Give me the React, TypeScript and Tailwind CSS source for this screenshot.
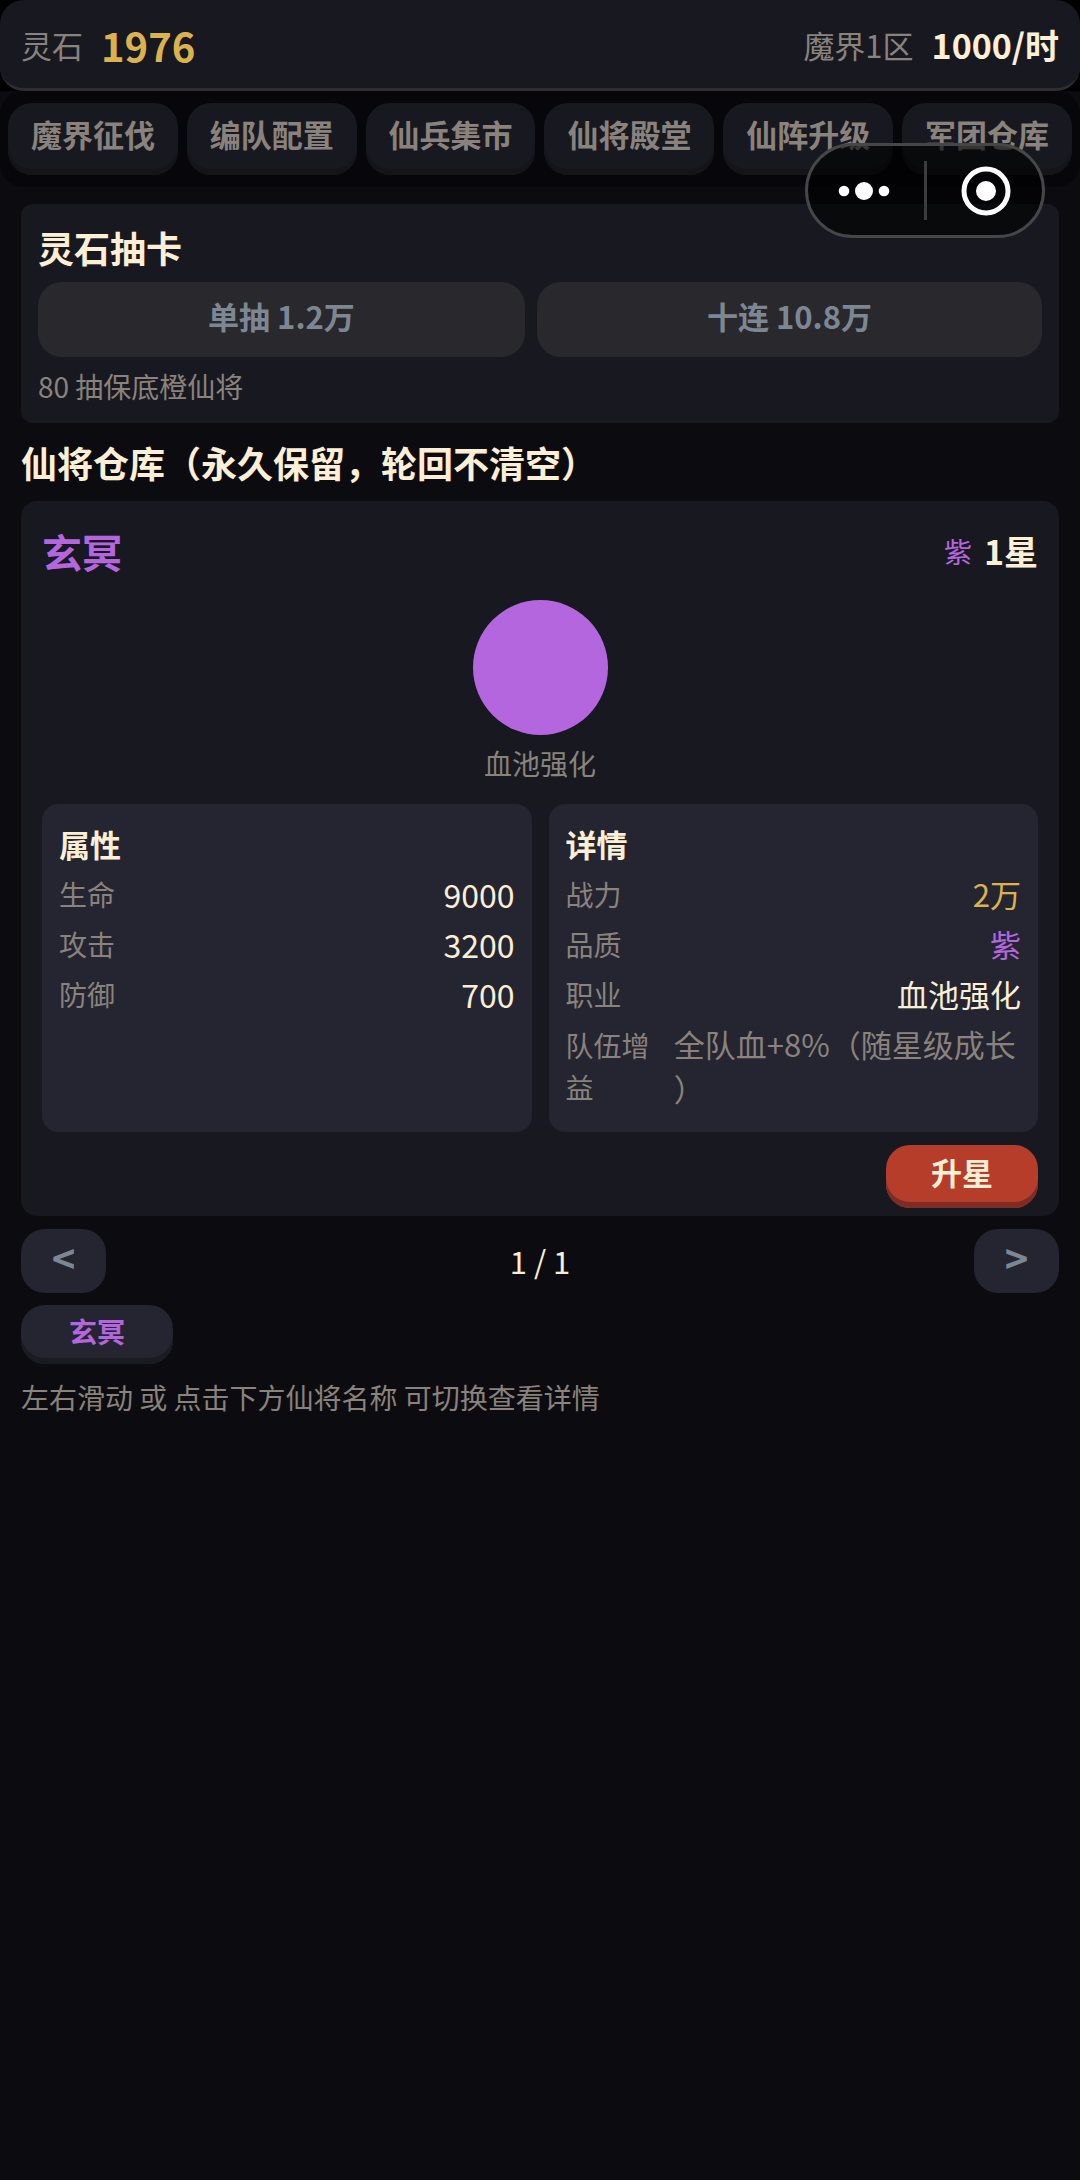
const tabs = ['魔界征伐', '编队配置', '仙兵集市', '仙将殿堂', '仙阵升级', '军团仓库']

const stats = [
    { label: '生命', value: '9000', color: 'text-[#fbeed6]' },
    { label: '攻击', value: '3200', color: 'text-[#fbeed6]' },
    { label: '防御', value: '700', color: 'text-[#fbeed6]' },
]

const details = [
    { label: '战力', value: '2万', color: 'text-[#dcb24e]' },
    { label: '品质', value: '紫', color: 'text-[#b466de]' },
    { label: '职业', value: '血池强化', color: 'text-[#fbeed6]' },
    { label: '队伍增益', value: '全队血+8%（随星级成长）', color: 'text-[#8a827c]' },
]

function Header () {
    return (
        <header className="flex items-center justify-between rounded-3xl border-b-3 border-[#302e31] bg-[#181920] px-[21px] pt-[17px] pb-[15px] leading-[56px]">
            <div className="flex items-center gap-[18px]">
                <span className="text-[31px] text-[#8a827c]">灵石</span>
                <span className="text-[40px] font-bold text-[#dcb24e]">1976</span>
            </div>
            <div className="flex items-center gap-[18px]">
                <span className="text-[31px] text-[#8a827c]">魔界1区</span>
                <span className="text-[34px] font-bold text-[#fdefd5]">1000/时</span>
            </div>
        </header>
    )
}

function Nav () {
    return (
        <nav className="flex gap-[9px] rounded-3xl bg-[#07070b] px-2 py-3">
            {tabs.map((tab) => (
                <button
                    key={tab}
                    type="button"
                    className="h-[72px] flex-1 rounded-3xl bg-[#181920] pb-2.5 text-[31px] font-bold whitespace-nowrap text-[#8a827c] shadow-[inset_0_-6px_0_#141419]"
                >
                    {tab}
                </button>
            ))}
        </nav>
    )
}

// floating mini-program menu, sits over the tabs
function Capsule () {
    return (
        <div className="absolute top-[143px] right-[35px] flex h-[95px] w-60 items-center rounded-full border-3 border-[#464649] bg-black/60">
            <button type="button" aria-label="更多" className="flex flex-1 justify-center pr-1">
                <svg width="52" height="20" viewBox="0 0 52 20" fill="#fff">
                    <circle cx="6" cy="10" r="5.3" />
                    <circle cx="26" cy="10" r="9" />
                    <circle cx="46" cy="10" r="5.3" />
                </svg>
            </button>
            <span className="h-[59px] w-[3px] bg-[#3c3c3f]" />
            <button type="button" aria-label="关闭" className="flex flex-1 justify-center pl-1">
                <svg width="50" height="50" viewBox="0 0 50 50">
                    <circle cx="25" cy="25" r="22" fill="none" stroke="#fff" strokeWidth="5" />
                    <circle cx="25" cy="25" r="10" fill="#fff" />
                </svg>
            </button>
        </div>
    )
}

function DrawCard () {
    return (
        <section className="rounded-xl bg-[#181920] px-[17px] pt-[17px] pb-4">
            <h2 className="text-[36px] leading-[52px] font-bold text-[#fdefd5]">灵石抽卡</h2>
            <div className="mt-[9px] flex gap-3">
                <button type="button" className="h-[75px] flex-auto rounded-3xl bg-[#29292d] pb-1.5 text-[31px] font-bold text-[#7d8794]">单抽 1.2万</button>
                <button type="button" className="h-[75px] flex-auto rounded-3xl bg-[#29292d] pb-1.5 text-[31px] font-bold text-[#7d8794]">十连 10.8万</button>
            </div>
            <p className="mt-2 text-[28px] leading-[42px] text-[#8a827c]">80 抽保底橙仙将</p>
        </section>
    )
}

function InfoPanel ({ title, rows }: { title: string, rows: typeof stats }) {
    return (
        <div className="min-w-0 flex-1 rounded-2xl bg-[#242530] px-[17px] pt-[18px] pb-[22px] leading-[44px]">
            <h3 className="text-[31px] font-bold text-[#fdefd5]">{title}</h3>
            <dl>
                {rows.map((row) => (
                    <div key={row.label} className="mt-1.5 flex items-center justify-between gap-1">
                        <dt className="text-[28px] leading-[42px] text-[#8a827c]">{row.label}</dt>
                        <dd className={`[line-break:anywhere] ${/^\d+$/.test(row.value) ? 'text-[32px]' : 'text-[31px]'} ${row.color}`}>{row.value}</dd>
                    </div>
                ))}
            </dl>
        </div>
    )
}

function HeroCard () {
    return (
        <section className="mt-3 rounded-2xl bg-[#181920] px-[21px] pt-[21px] pb-2">
            <div className="flex items-center justify-between leading-[58px]">
                <h3 className="text-[40px] font-bold text-[#b466de]">玄冥</h3>
                <div className="flex items-center gap-3">
                    <span className="text-[28px] text-[#b466de]">紫</span>
                    <span className="text-[34px] font-bold text-[#fdefd5]">1星</span>
                </div>
            </div>
            <div className="mt-5 flex flex-col items-center">
                <div className="size-[135px] rounded-full bg-[#b466de]" />
                <p className="mt-[7px] text-[28px] leading-[42px] text-[#8a827c]">血池强化</p>
            </div>
            <div className="mt-5 flex gap-[17px]">
                <InfoPanel title="属性" rows={stats} />
                <InfoPanel title="详情" rows={details} />
            </div>
            <div className="mt-[13px] flex justify-end">
                <button type="button" className="h-[63px] rounded-3xl bg-[#b53d2a] px-[45px] pb-2 text-[31px] font-bold text-[#fdefd5] shadow-[inset_0_-6px_0_#7e2c25]">升星</button>
            </div>
        </section>
    )
}

function App () {
    return (
        <div className="relative min-h-screen bg-[#0c0c10] font-['Noto_Sans_CJK_SC',sans-serif]">
            <div className="bg-black">
                <Header />
            </div>
            <Nav />
            <Capsule />
            <main className="px-[21px] pt-[17px]">
                <DrawCard />
                <h2 className="mt-3 text-[36px] leading-[54px] font-bold text-[#fdefd5]">仙将仓库（永久保留，轮回不清空）</h2>
                <HeroCard />
                <div className="mt-[13px] flex items-center justify-between">
                    <button type="button" className="h-16 w-[85px] rounded-3xl bg-[#242530] pb-2 text-[40px] leading-[56px] font-bold text-[#7d8794]">&lt;</button>
                    <span className="text-[31px] text-[#fbeed6]">1 / 1</span>
                    <button type="button" className="h-16 w-[85px] rounded-3xl bg-[#242530] pb-2 text-[40px] leading-[56px] font-bold text-[#7d8794]">&gt;</button>
                </div>
                <div className="mt-3 flex">
                    <button type="button" className="h-[59px] rounded-3xl bg-[#242530] px-12 pb-2 text-[28px] font-bold text-[#b466de] shadow-[inset_0_-6px_0_#1b1b23]">玄冥</button>
                </div>
                <p className="mt-3 text-[28px] leading-[42px] text-[#8a827c]">左右滑动 或 点击下方仙将名称 可切换查看详情</p>
            </main>
        </div>
    )
}

export default App
